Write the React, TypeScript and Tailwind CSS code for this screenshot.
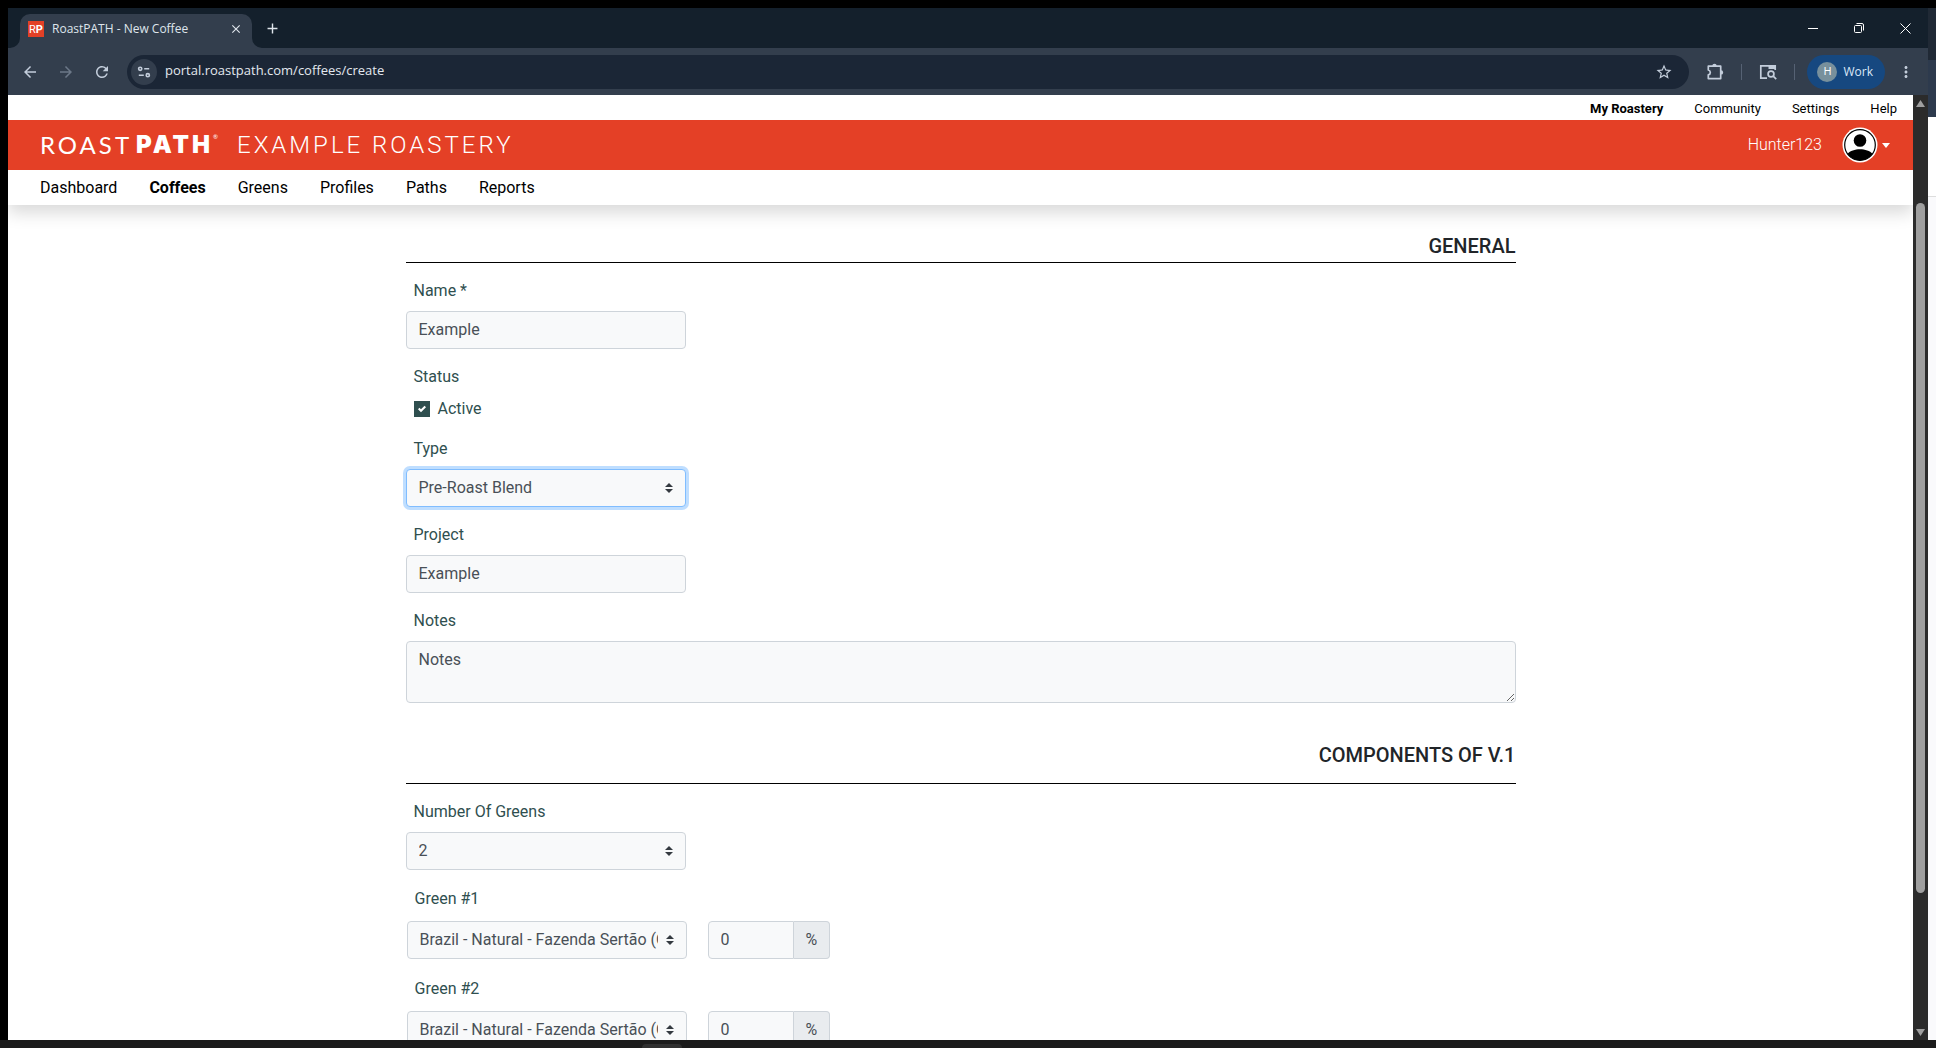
import React, { useState } from "react";
import { MdAdd, MdArrowBack, MdArrowForward, MdClose, MdMoreVert, MdRefresh, MdStarBorder } from "react-icons/md";

const NAV = ["Dashboard", "Coffees", "Greens", "Profiles", "Paths", "Reports"];
const TOP_NAV = ["My Roastery", "Community", "Settings", "Help"];
const GREEN = "Brazil - Natural - Fazenda Sertão (C";

const CONTROL = "w-full h-[38px] rounded border bg-[#f8f9fa] px-3 text-base text-[#495057] outline-none";

function TuneIcon() {
  return (
    <svg width="16" height="16" viewBox="0 0 16 16" fill="none" stroke="currentColor" strokeWidth="1.6">
      <circle cx="4.2" cy="4.8" r="1.6" />
      <path d="M8.2 4.8h5M2.8 11.2h5" />
      <circle cx="11.8" cy="11.2" r="1.6" />
    </svg>
  );
}

function ExtensionIcon() {
  return (
    <svg width="20" height="20" viewBox="0 0 20 20" fill="none" stroke="currentColor" strokeWidth="1.7" strokeLinejoin="round">
      <path d="M3.300 4.200h12.400v12.400H3.300v-3.800c2.700-.7 2.700-4.100 0-4.800z" />
      <path d="M7.300 4a2.200 2.200 0 0 1 4.400 0zM16 8.200a2.200 2.200 0 0 1 0 4.400z" fill="currentColor" stroke="none" />
    </svg>
  );
}

function SearchPanelIcon() {
  return (
    <svg width="20" height="20" viewBox="0 0 20 20" fill="none" stroke="currentColor" strokeWidth="1.7">
      <path d="M9 16.2H2.800V3.800h14.400V8" />
      <path d="M10.500 3.800h6.700V7h-6.700z" fill="currentColor" stroke="none" />
      <circle cx="13" cy="12" r="2.900" />
      <path d="m15.200 14.200 3 3" />
    </svg>
  );
}

function BrowserTabs() {
  return (
    <div className="flex h-10 shrink-0 items-stretch bg-[#14202c] pl-[2px] text-[#dfe5ec]">
      <svg className="self-end text-[#333e4d]" width="10" height="10" viewBox="0 0 10 10" fill="currentColor">
        <path d="M10 0v10H0A10 10 0 0 0 10 0z" />
      </svg>
      <div className="mt-[6px] flex w-[232px] items-center rounded-t-[10px] bg-[#333e4d] pb-1 pl-2 pr-[9px]">
        <span className="flex h-4 w-4 items-center justify-center bg-[#e34026] font-['Roboto',sans-serif] text-[11px] leading-none text-white">
          R<b>P</b>
        </span>
        <span className="ml-2 flex-1 text-[12px] leading-4">RoastPATH - New Coffee</span>
        <button aria-label="Close tab">
          <MdClose size={14} />
        </button>
      </div>
      <svg className="self-end text-[#333e4d]" width="10" height="10" viewBox="0 0 10 10" fill="currentColor">
        <path d="M0 0v10h10A10 10 0 0 1 0 0z" />
      </svg>
      <button className="ml-[2px] flex items-center" aria-label="New tab">
        <MdAdd size={17} />
      </button>
      <div className="ml-auto flex items-center gap-9 pr-[17px] text-white">
        <button aria-label="Minimize">
          <svg width="10" height="10" viewBox="0 0 10 10" stroke="currentColor">
            <path d="M0 5.500h10" />
          </svg>
        </button>
        <button aria-label="Restore">
          <svg width="10" height="10" viewBox="0 0 10 10" fill="none" stroke="currentColor">
            <rect x=".5" y="2.5" width="7" height="7" rx="1" />
            <path d="M2.500.5H8A1.500 1.500 0 0 1 9.500 2v5.500" />
          </svg>
        </button>
        <button aria-label="Close window">
          <svg width="11" height="11" viewBox="0 0 11 11" stroke="currentColor">
            <path d="m.5.5 10 10m0-10-10 10" />
          </svg>
        </button>
      </div>
    </div>
  );
}

function AddressBar() {
  return (
    <div className="flex h-[47px] shrink-0 items-center bg-[#333e4d] px-[13px] text-[#c3cddb]">
      <div className="flex gap-[18px]">
        <button aria-label="Back">
          <MdArrowBack size={18} />
        </button>
        <button aria-label="Forward" className="text-[#6c7888]">
          <MdArrowForward size={18} />
        </button>
        <button aria-label="Reload">
          <MdRefresh size={18} />
        </button>
      </div>
      <div className="ml-4 flex h-[34px] flex-1 items-center rounded-full bg-[#1b2636] pl-1 pr-4">
        <span className="flex h-[26px] w-[26px] items-center justify-center rounded-full bg-[#333e4d]">
          <TuneIcon />
        </span>
        <input
          aria-label="Address"
          className="ml-2 flex-1 bg-transparent pb-px text-[13px] text-[#e3e8ef] outline-none"
          defaultValue="portal.roastpath.com/coffees/create"
        />
        <button aria-label="Bookmark">
          <MdStarBorder size={18} />
        </button>
      </div>
      <button className="ml-4" aria-label="Extensions">
        <ExtensionIcon />
      </button>
      <span className="ml-4 h-4 w-px bg-[#566274]" />
      <button className="ml-4" aria-label="Search side panel">
        <SearchPanelIcon />
      </button>
      <span className="ml-4 h-4 w-px bg-[#566274]" />
      <button className="ml-3 flex h-[34px] items-center rounded-full bg-[#164880] pl-[10px] pr-3 text-[12px] text-[#dbe7f7]">
        <span className="mr-[6px] flex h-5 w-5 items-center justify-center rounded-full bg-[#78909c] text-[11px] text-white">H</span>
        Work
      </button>
      <button className="ml-3" aria-label="Menu">
        <MdMoreVert size={18} />
      </button>
    </div>
  );
}

function SiteHeader() {
  return (
    <header className="relative shrink-0 bg-white text-black shadow-[0_8px_16px_rgba(0,0,0,0.15)]">
      <nav className="flex h-[25px] items-center justify-end gap-[31px] pr-4 pt-[2px] text-[13px]">
        {TOP_NAV.map((item, i) => (
          <a key={item} href="#" className={i === 0 ? "font-bold" : ""}>
            {item}
          </a>
        ))}
      </nav>
      <div className="flex h-[50px] items-center bg-[#e44026] px-8 text-2xl font-light text-white">
        <a href="#" className="flex items-start font-['Lato',sans-serif] font-normal tracking-[3px]">
          ROAST<span className="ml-1 font-['Inter',sans-serif] font-black">PATH</span>
          <span className="text-[6px] leading-4">®</span>
        </a>
        <span className="ml-4 tracking-[3px]">EXAMPLE ROASTERY</span>
        <button className="-mr-[9px] ml-auto flex items-center text-base font-light">
          Hunter123
          <svg className="ml-5" width="36" height="36" viewBox="0 0 36 36">
            <circle cx="18" cy="18" r="17.5" fill="#fff" />
            <circle cx="18" cy="18" r="15.3" fill="#fff" stroke="#000" strokeWidth="1.2" />
            <circle cx="18" cy="13.5" r="6.3" fill="#000" />
            <path d="M5.500 27c5-6.200 20-6.200 25 0A15.400 15.400 0 0 1 5.500 27z" fill="#000" />
          </svg>
          <svg className="ml-1" width="8" height="5" viewBox="0 0 8 5" fill="#fff">
            <path d="M0 0h8L4 5z" />
          </svg>
        </button>
      </div>
      <nav className="flex h-[35px] items-center gap-8 px-8 text-base">
        {NAV.map((item) => (
          <a key={item} href="#" className={item === "Coffees" ? "font-bold" : ""}>
            {item}
          </a>
        ))}
      </nav>
    </header>
  );
}

function Label({ htmlFor, children }: React.PropsWithChildren<{ htmlFor?: string }>) {
  return (
    <label htmlFor={htmlFor} className="block pl-2 leading-6">
      {children}
    </label>
  );
}

function Select({ id, options, focused }: { id: string; options: string[]; focused?: boolean }) {
  return (
    <div className="relative w-[280px]">
      <select
        id={id}
        className={`${CONTROL} appearance-none pr-7 ${
          focused ? "border-[#80bdff] shadow-[0_0_0_3px_rgba(0,123,255,0.25)]" : "border-[#ced4da]"
        }`}
      >
        {options.map((o) => (
          <option key={o}>{o}</option>
        ))}
      </select>
      <svg className="pointer-events-none absolute right-3 top-[14px]" width="10" height="10" viewBox="0 0 4 5" fill="#343a40">
        <path d="M2 0 0 2h4zm0 5L0 3h4z" />
      </svg>
    </div>
  );
}

function GreenRow({ index }: { index: number }) {
  const [percent, setPercent] = useState("0");
  return (
    <div className="mb-[18px] flex flex-col gap-[10px]">
      <Label htmlFor={`green-${index}`}>Green #{index}</Label>
      <div className="flex gap-[21px]">
        <Select id={`green-${index}`} options={[GREEN]} />
        <div className="flex">
          <input
            aria-label={`Green #${index} percent`}
            className="h-[38px] w-[86px] rounded-l border border-[#ced4da] bg-[#f8f9fa] px-3 pb-[2px] text-[#495057] outline-none"
            value={percent}
            onChange={(e) => setPercent(e.target.value)}
          />
          <span className="flex h-[38px] items-center rounded-r border border-l-0 border-[#ced4da] bg-[#e9ecef] px-3 text-[#495057]">
            %
          </span>
        </div>
      </div>
    </div>
  );
}

function CoffeeForm() {
  return (
    <form className="mx-auto mt-[29px] w-full max-w-[1110px] text-base text-[#2f4f4f]">
      <h2 className="mb-4 border-b border-black pb-1 text-right text-xl font-medium leading-6 text-[#212529]">GENERAL</h2>
      <div className="flex flex-col gap-4">
        <div className="flex flex-col gap-2">
          <Label htmlFor="name">Name *</Label>
          <div className="w-[280px]">
            <input id="name" className={`${CONTROL} border-[#ced4da] pb-[2px]`} defaultValue="Example" />
          </div>
        </div>
        <div className="flex flex-col gap-2">
          <span className="pl-2 leading-6">Status</span>
          <label className="flex h-6 items-center gap-2 pl-2">
            <span className="relative flex">
              <input type="checkbox" defaultChecked className="peer h-4 w-4 appearance-none border border-[#2f4f4f] checked:bg-[#2f4f4f]" />
              <svg className="pointer-events-none absolute inset-1 hidden peer-checked:block" width="8" height="8" viewBox="0 0 8 8">
                <path fill="#fff" d="M6.564.75l-3.590 3.612-1.538-1.550L0 4.260 2.974 7.250 8 2.193z" />
              </svg>
            </span>
            Active
          </label>
        </div>
        <div className="flex flex-col gap-2">
          <Label htmlFor="type">Type</Label>
          <Select id="type" options={["Pre-Roast Blend"]} focused />
        </div>
        <div className="flex flex-col gap-2">
          <Label htmlFor="project">Project</Label>
          <div className="w-[280px]">
            <input id="project" className={`${CONTROL} border-[#ced4da] pb-[2px]`} defaultValue="Example" />
          </div>
        </div>
        <div className="flex flex-col gap-2">
          <Label htmlFor="notes">Notes</Label>
          <textarea
            id="notes"
            className="h-[62px] w-full rounded border border-[#ced4da] bg-[#f8f9fa] px-3 py-[6px] leading-6 text-[#495057] outline-none"
            defaultValue="Notes"
          />
        </div>
      </div>
      <h2 className="mb-4 mt-10 border-b border-black pb-4 text-right text-xl font-medium leading-6 text-[#212529]">
        COMPONENTS OF V.1
      </h2>
      <div className="mb-[17px] flex flex-col gap-2">
        <Label htmlFor="count">Number Of Greens</Label>
        <Select id="count" options={["2"]} />
      </div>
      <div className="ml-px">
        <GreenRow index={1} />
        <GreenRow index={2} />
      </div>
    </form>
  );
}

function Scrollbar() {
  return (
    <div className="flex w-[15px] shrink-0 flex-col items-center bg-[#2b2b2b] pb-1 pt-[5px] text-[#9f9f9f]">
      <svg width="9" height="7" viewBox="0 0 9 7" fill="currentColor">
        <path d="M4.500 0 9 7H0z" />
      </svg>
      <div className="flex-[96]" />
      <div className="w-[9px] flex-[690] rounded-full bg-current" />
      <div className="flex-[136]" />
      <svg width="9" height="7" viewBox="0 0 9 7" fill="currentColor">
        <path d="M4.500 7 0 0h9z" />
      </svg>
    </div>
  );
}

export default function App() {
  return (
    <div className="flex h-screen flex-col overflow-hidden bg-black pt-2 font-['Roboto',sans-serif]">
      <div className="flex min-h-0 flex-1">
        <div className="ml-2 flex min-w-0 flex-1 flex-col">
          <div className="shrink-0 font-['Open_Sans',sans-serif]">
            <BrowserTabs />
            <AddressBar />
          </div>
          <div className="flex min-h-0 flex-1">
            <div className="flex min-w-0 flex-1 flex-col overflow-hidden bg-white">
              <SiteHeader />
              <main className="min-h-0 flex-1 overflow-hidden">
                <CoffeeForm />
              </main>
            </div>
            <Scrollbar />
          </div>
        </div>
        {/* edge of the window behind */}
        <div className="flex w-2 flex-col bg-[#fafafc]">
          <div className="h-[52px] bg-[#202935]" />
          <div className="h-[57px] bg-[#2d3a4d]" />
          <div className="h-20 border-b border-[#dddddd] bg-white" />
        </div>
      </div>
      <div className="flex h-2 shrink-0 items-end bg-[#1b1b1b]">
        <div className="ml-[642px] h-1 w-10 rounded-t bg-[#2f2f2f]" />
      </div>
    </div>
  );
}
